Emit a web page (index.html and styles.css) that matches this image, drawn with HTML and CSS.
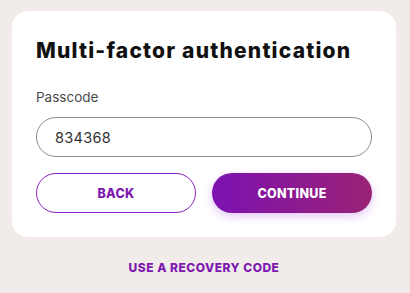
FILE: index.html
```html
<!DOCTYPE html>
<html lang="en">
<head>
<meta charset="utf-8">
<title>Multi-factor authentication</title>
<link rel="stylesheet" href="styles.css">
</head>
<body>
<main class="page">
  <section class="card">
    <h1 class="title">Multi-factor authentication</h1>
    <label class="label" for="code">Passcode</label>
    <input class="field" id="code" type="text" value="834368">
    <div class="actions">
      <button class="btn btn-outline" type="button">BACK</button>
      <button class="btn btn-primary" type="button">CONTINUE</button>
    </div>
  </section>
  <a class="link" href="#">USE A RECOVERY CODE</a>
</main>
</body>
</html>
```

FILE: styles.css
```css
* { box-sizing: border-box; }
html, body { margin: 0; padding: 0; }
body {
  background: #f1ecea;
  font-family: "Inter", "Liberation Sans", sans-serif;
  width: 410px;
  height: 293px;
  overflow: hidden;
}
.page {
  padding: 11px 14px 0 12px;
  display: flex;
  flex-direction: column;
}
.card {
  background: #fff;
  border-radius: 16px;
  padding: 27px 24px 24px;
  display: flex;
  flex-direction: column;
  height: 226px;
}
.title {
  margin: 0;
  font-size: 21px;
  line-height: 26px;
  font-weight: 800;
  color: #111;
  letter-spacing: 1.2px;
}
.label {
  margin-top: 24px;
  font-size: 13.5px;
  line-height: 18px;
  color: #4a4a4a;
}
.field {
  margin-top: 11px;
  height: 40px;
  border: 1px solid #8f8f8f;
  border-radius: 20px;
  padding: 0 18px;
  font-family: inherit;
  font-size: 14.5px;
  color: #333;
  outline: none;
  letter-spacing: 0.3px;
}
.actions {
  margin-top: 16px;
  display: grid;
  grid-template-columns: 1fr 1fr;
  gap: 16px;
}
.btn {
  height: 40px;
  border-radius: 20px;
  font-family: inherit;
  font-weight: 800;
  font-size: 12.5px;
  letter-spacing: 0.3px;
}
.btn-outline {
  background: #fff;
  border: 1px solid #8a1ec0;
  color: #7d18b0;
}
.btn-primary {
  border: none;
  color: #fff;
  background: linear-gradient(90deg, #7c12b1 0%, #9a2274 100%);
  box-shadow: 0 3px 10px rgba(160, 60, 230, 0.3);
}
.link {
  align-self: center;
  margin-top: 23px;
  font-weight: 800;
  font-size: 12px;
  letter-spacing: 0.5px;
  color: #7d18b0;
  text-decoration: none;
}
```
